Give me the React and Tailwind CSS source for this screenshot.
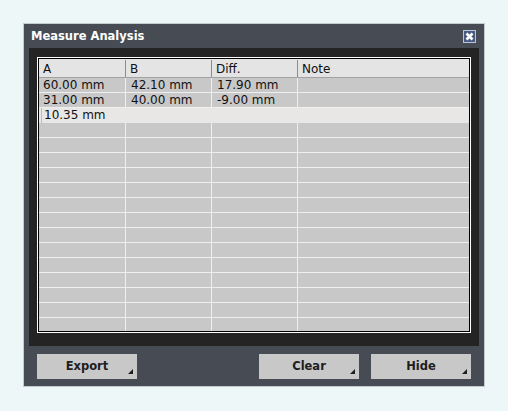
const rows = [
  ["60.00 mm", "42.10 mm", "17.90 mm", ""],
  ["31.00 mm", "40.00 mm", "-9.00 mm", ""],
];

const emptyRows = Array.from({ length: 14 });

const Corner = () => (
  <svg className="absolute right-[4px] bottom-[5px]" width="5" height="5" viewBox="0 0 5 5">
    <polygon points="5,0 5,5 0,5" fill="#1e1e1e" />
  </svg>
);

const DlgButton = ({ label }) => (
  <button className="relative w-[100px] h-[25px] pt-[1px] bg-[#c8c8c8] text-[#1e1e1e] font-bold text-[11.5px] flex items-center justify-center">
    {label}
    <Corner />
  </button>
);

const App = () => {
  return (
    <div className="w-[508px] h-[411px] bg-[#eef7f7] pt-[23px] pl-[23px] font-['DejaVu_Sans',sans-serif]">
      {/* Dialog */}
      <div className="w-[462px] h-[364px] border border-[#c3cbcd] bg-[#474c54] flex flex-col">
        {/* Title bar */}
        <div className="h-[24px] flex items-center justify-between pl-[7px] pr-[8px]">
          <span className="text-white font-bold text-[11.5px] pt-[1px]">Measure Analysis</span>
          <div className="w-[13px] h-[13px] border border-[#b9c5d9] bg-[#4a5a82] flex items-center justify-center">
            <svg width="9" height="9" viewBox="0 0 9 9">
              <path d="M1.5 1.5 L7.5 7.5 M7.5 1.5 L1.5 7.5" stroke="#ffffff" strokeWidth="2.6" />
            </svg>
          </div>
        </div>

        {/* Dark panel with table */}
        <div className="mx-[5px] h-[298px] bg-[#242424] pt-[9px] px-[8px]">
          <div className="h-[276px] border border-white">
            <div className="h-full border border-black overflow-hidden text-[12px] text-[#111]">
              {/* Header */}
              <div className="flex h-[19px] bg-[#e4e4e4] border-b border-[#a2a2a2] pt-[1px]">
                <div className="w-[87px] pl-[4px] border-r border-[#8c8c8c] flex items-center">A</div>
                <div className="w-[86px] pl-[4px] border-r border-[#8c8c8c] flex items-center">B</div>
                <div className="w-[86px] pl-[4px] border-r border-[#8c8c8c] flex items-center">Diff.</div>
                <div className="flex-1 pl-[4px] flex items-center">Note</div>
              </div>

              {rows.map((r, i) => (
                <div key={i} className="flex h-[15px] bg-[#c8c8c8] border-b border-[#efefef] leading-[15px]">
                  <div className="w-[87px] pl-[4px] border-r border-[#efefef]">{r[0]}</div>
                  <div className="w-[86px] pl-[5px] border-r border-[#efefef]">{r[1]}</div>
                  <div className="w-[86px] pl-[5px] border-r border-[#efefef]">{r[2]}</div>
                  <div className="flex-1 pl-[5px]">{r[3]}</div>
                </div>
              ))}

              {/* Editing row */}
              <div className="flex h-[15px] bg-[#e9e7e5] leading-[15px]">
                <div className="pl-[2px] flex items-end">
                  <span className="border-l border-[#bdbdbd] pl-[2px]">10.35 mm</span>
                </div>
              </div>

              {emptyRows.map((_, i) => (
                <div key={i} className="flex h-[15px] bg-[#c8c8c8] border-b border-[#efefef]">
                  <div className="w-[87px] border-r border-[#efefef]"></div>
                  <div className="w-[86px] border-r border-[#efefef]"></div>
                  <div className="w-[86px] border-r border-[#efefef]"></div>
                  <div className="flex-1"></div>
                </div>
              ))}
            </div>
          </div>
        </div>

        {/* Buttons */}
        <div className="mt-[8px] flex px-[13px]">
          <DlgButton label="Export" />
          <div className="flex-1"></div>
          <div className="flex gap-[12px]">
            <DlgButton label="Clear" />
            <DlgButton label="Hide" />
          </div>
        </div>
      </div>
    </div>
  );
};

export default App;
